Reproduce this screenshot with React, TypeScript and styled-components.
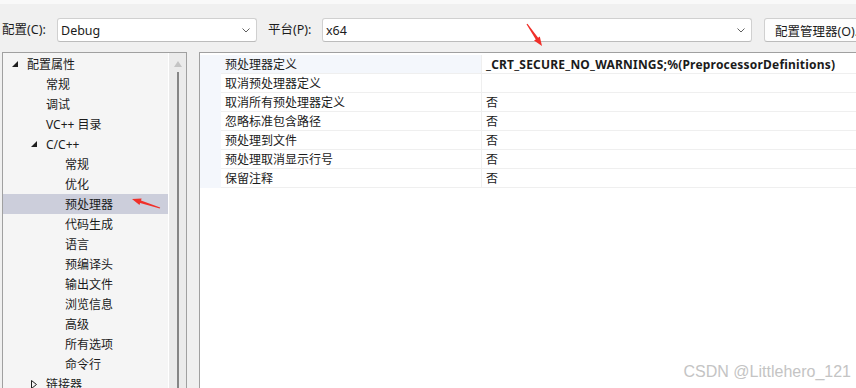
import React from 'react';
import styled, { createGlobalStyle } from 'styled-components';

const Global = createGlobalStyle`
  * { box-sizing: border-box; }
  html, body { margin: 0; padding: 0; width: 856px; height: 388px; overflow: hidden; background: #f0f0f0; }
  #root { width: 856px; height: 388px; }
`;

const UI_FONT = `"Noto Sans", "Noto Sans CJK SC", sans-serif`;

const Page = styled.div`
  position: relative;
  width: 856px;
  height: 388px;
  display: flex;
  flex-direction: column;
  overflow: hidden;
  background: #f0f0f0;
  font-family: ${UI_FONT};
  font-size: 12px;
  color: #1b1b1b;
`;

const TopStrip = styled.div`
  height: 4px;
  flex: none;
  background: #f9f9f9;
`;

const Toolbar = styled.div`
  flex: none;
  height: 48px;
  display: flex;
  align-items: flex-start;
  padding: 14px 0 0 2px;
  overflow: hidden;
`;

const Label = styled.div<{ $w: number; $ml?: number }>`
  flex: none;
  width: ${(p) => p.$w}px;
  margin-left: ${(p) => p.$ml ?? 0}px;
  height: 24px;
  line-height: 24px;
  white-space: nowrap;
  font-size: 12.5px;
`;

const Combo = styled.div<{ $w: number }>`
  width: ${(p) => p.$w}px;
  height: 24px;
  flex: none;
  display: flex;
  align-items: center;
  justify-content: space-between;
  padding: 0 6px 0 3px;
  background: #ffffff;
  border: 1px solid #d0d0d0;
  border-bottom-color: #bcbcbc;
  border-radius: 3px;
  font-size: 12.5px;
`;

const Button = styled.div`
  margin-left: 12px;
  width: 112px;
  height: 24px;
  flex: none;
  display: flex;
  align-items: center;
  padding-left: 10px;
  background: #fdfdfd;
  border: 1px solid #d0d0d0;
  border-bottom-color: #bcbcbc;
  border-radius: 3px;
  white-space: nowrap;
  font-size: 12.5px;
`;

const Chevron = () => (
  <svg width="8" height="5" viewBox="0 0 8 5">
    <path d="M0.5 0.5 L4 4 L7.5 0.5" fill="none" stroke="#5f5f5f" strokeWidth="1" />
  </svg>
);

const Main = styled.div`
  flex: 1;
  min-height: 0;
  display: flex;
  gap: 12px;
  padding-left: 2px;
`;

const TreePanel = styled.div`
  width: 185px;
  flex: none;
  display: flex;
  border: 1px solid #a0a0a0;
  border-bottom: none;
  background: #f5f5f5;
  overflow: hidden;
`;

const TreeList = styled.div`
  width: 166px;
  flex: none;
  padding-top: 1px;
  border-right: 1px solid #ffffff;
`;

const TreeRow = styled.div<{ $level: number; $selected?: boolean }>`
  height: 20px;
  display: flex;
  align-items: center;
  padding-left: ${(p) => 9 + p.$level * 19}px;
  background: ${(p) => (p.$selected ? '#cccedb' : 'transparent')};
  white-space: nowrap;
`;

const Expander = styled.span`
  width: 15px;
  height: 20px;
  flex: none;
  display: flex;
  align-items: center;
`;

const ScrollBar = styled.div`
  width: 17px;
  flex: none;
  display: flex;
  flex-direction: column;
  align-items: center;
  background: #ebebeb;
  padding-top: 8px;
`;

const ScrollThumb = styled.div`
  width: 2px;
  flex: 1;
  margin-top: 5px;
  background: #868686;
`;

const PropPanel = styled.div`
  flex: 1;
  margin-right: -2px;
  border: 1px solid #a0a0a0;
  border-bottom: none;
  background: #ffffff;
  padding-top: 2px;
  overflow: hidden;
`;

const PropRow = styled.div`
  display: grid;
  grid-template-columns: 21px 261px 1fr;
  height: 19px;
`;

const Gutter = styled.div`
  background: #f4f7fc;
`;

const NameCell = styled.div<{ $hl?: boolean }>`
  padding-left: 4px;
  display: flex;
  align-items: center;
  border-bottom: 1px solid #efefef;
  border-right: 1px solid #efefef;
  background: ${(p) => (p.$hl ? '#f4f7fc' : '#ffffff')};
  white-space: nowrap;
`;

const ValueCell = styled.div<{ $bold?: boolean }>`
  padding-left: 4px;
  display: flex;
  align-items: center;
  border-bottom: 1px solid #efefef;
  font-weight: ${(p) => (p.$bold ? 700 : 400)};
  letter-spacing: ${(p) => (p.$bold ? '0.2px' : '0')};
  white-space: nowrap;
`;

const Overlay = styled.svg`
  position: absolute;
  left: 0;
  top: 0;
  width: 856px;
  height: 388px;
  pointer-events: none;
`;

const Watermark = styled.div`
  position: absolute;
  right: 5px;
  bottom: 7px;
  font-family: "Liberation Sans", Arial, sans-serif;
  font-size: 16px;
  color: #c4c4c4;
  white-space: nowrap;
`;

const ExpandedGlyph = () => (
  <svg width="6" height="6" viewBox="0 0 6 6">
    <polygon points="6,0 6,6 0,6" fill="#1e1e1e" />
  </svg>
);

const CollapsedGlyph = () => (
  <svg width="6" height="9" viewBox="0 0 6 9">
    <polygon points="0.5,0.5 5.5,4.5 0.5,8.5" fill="none" stroke="#1e1e1e" strokeWidth="1" />
  </svg>
);

type TreeItem = { label: string; level: number; exp?: 'open' | 'closed'; sel?: boolean };

const tree: TreeItem[] = [
  { label: '配置属性', level: 0, exp: 'open' },
  { label: '常规', level: 1 },
  { label: '调试', level: 1 },
  { label: 'VC++ 目录', level: 1 },
  { label: 'C/C++', level: 1, exp: 'open' },
  { label: '常规', level: 2 },
  { label: '优化', level: 2 },
  { label: '预处理器', level: 2, sel: true },
  { label: '代码生成', level: 2 },
  { label: '语言', level: 2 },
  { label: '预编译头', level: 2 },
  { label: '输出文件', level: 2 },
  { label: '浏览信息', level: 2 },
  { label: '高级', level: 2 },
  { label: '所有选项', level: 2 },
  { label: '命令行', level: 2 },
  { label: '链接器', level: 1, exp: 'closed' },
];

const props: { name: string; value: string; bold?: boolean }[] = [
  { name: '预处理器定义', value: '_CRT_SECURE_NO_WARNINGS;%(PreprocessorDefinitions)', bold: true },
  { name: '取消预处理器定义', value: '' },
  { name: '取消所有预处理器定义', value: '否' },
  { name: '忽略标准包含路径', value: '否' },
  { name: '预处理到文件', value: '否' },
  { name: '预处理取消显示行号', value: '否' },
  { name: '保留注释', value: '否' },
];

function arrowPoints(x1: number, y1: number, x2: number, y2: number, headLen = 9, headW = 7) {
  const dx = x2 - x1;
  const dy = y2 - y1;
  const L = Math.hypot(dx, dy);
  const ux = dx / L;
  const uy = dy / L;
  const px = -uy;
  const py = ux;
  const bx = x2 - ux * headLen;
  const by = y2 - uy * headLen;
  const pts: [number, number][] = [
    [x1 + px * 0.6, y1 + py * 0.6],
    [bx + px * 1.4, by + py * 1.4],
    [bx + px * headW / 2, by + py * headW / 2],
    [x2, y2],
    [bx - px * headW / 2, by - py * headW / 2],
    [bx - px * 1.4, by - py * 1.4],
    [x1 - px * 0.6, y1 - py * 0.6],
  ];
  return pts.map((p) => `${p[0].toFixed(1)},${p[1].toFixed(1)}`).join(' ');
}

export default function App() {
  return (
    <Page>
      <Global />
      <TopStrip />
      <Toolbar>
        <Label $w={55}>配置(C):</Label>
        <Combo $w={200}>
          <span>Debug</span>
          <Chevron />
        </Combo>
        <Label $w={54} $ml={11}>平台(P):</Label>
        <Combo $w={430}>
          <span>x64</span>
          <Chevron />
        </Combo>
        <Button>配置管理器(O)...</Button>
      </Toolbar>
      <Main>
        <TreePanel>
          <TreeList>
            {tree.map((t, i) => (
              <TreeRow key={i} $level={t.level} $selected={t.sel}>
                <Expander>
                  {t.exp === 'open' && <ExpandedGlyph />}
                  {t.exp === 'closed' && <CollapsedGlyph />}
                </Expander>
                <span>{t.label}</span>
              </TreeRow>
            ))}
          </TreeList>
          <ScrollBar>
            <svg width="8" height="6" viewBox="0 0 8 6">
              <polygon points="4,0 8,6 0,6" fill="#c4c4c4" />
            </svg>
            <ScrollThumb />
          </ScrollBar>
        </TreePanel>
        <PropPanel>
          {props.map((p, i) => (
            <PropRow key={i}>
              <Gutter />
              <NameCell $hl={i === 0}>{p.name}</NameCell>
              <ValueCell $bold={p.bold}>{p.value}</ValueCell>
            </PropRow>
          ))}
        </PropPanel>
      </Main>
      <Overlay viewBox="0 0 856 388">
        <polygon points={arrowPoints(527, 24, 542, 46)} fill="#f0302a" />
        <polygon points={arrowPoints(160, 208, 132, 199)} fill="#f0302a" />
      </Overlay>
      <Watermark>CSDN @Littlehero_121</Watermark>
    </Page>
  );
}
